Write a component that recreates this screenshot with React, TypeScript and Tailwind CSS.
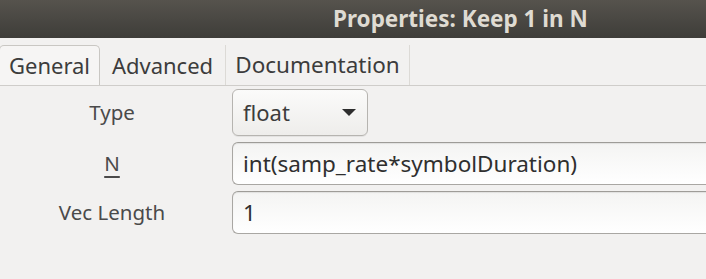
import React from "react";

export default function App() {
  const font = { fontFamily: '"Noto Sans", "Open Sans", sans-serif' };
  return (
    <div className="w-[706px] h-[279px] overflow-hidden bg-[#f2f1f0]" style={font}>
      <div className="h-[38px] bg-gradient-to-b from-[#56534d] to-[#3e3d39] flex items-center pl-[333px]">
        <span className="text-[22.5px] font-bold text-[#dfdbd2] whitespace-nowrap leading-none">Properties: Keep 1 in N</span>
      </div>
      <div className="pt-[7px]">
        <div className="flex h-[41px] border-b border-[#cfcdca] items-stretch">
          <div className="w-[101px] bg-[#f6f5f4] border border-b-0 border-[#c9c7c3] rounded-t-[5px] flex items-center justify-center text-[22px] text-[#3c3c3c] -ml-[1px]">
            General
          </div>
          <div className="w-[126px] border-r border-[#dcdad6] flex items-center justify-center text-[22px] text-[#3c3c3c]">
            Advanced
          </div>
          <div className="w-[184px] border-r border-[#dcdad6] flex items-center justify-center text-[22.5px] text-[#3c3c3c]">
            Documentation
          </div>
        </div>
        <div className="grid grid-cols-[224px_1fr] pt-[3px] gap-y-[6px] items-center">
          <div className="text-center text-[20.5px] text-[#4a4a4a]">Type</div>
          <div className="ml-[8px] w-[136px] h-[47px] rounded-[6px] border border-[#b6b4b0] bg-gradient-to-b from-[#fbfbfa] to-[#eeedeb] flex items-center justify-between pl-[10px] pr-[11px] text-[22px] text-[#3c3c3c] shadow-[0_1px_0_rgba(0,0,0,0.06)]">
            <span>float</span>
            <svg width="14" height="8" viewBox="0 0 14 8"><path d="M0 0 L14 0 L7 7 Z" fill="#2e2e2e" /></svg>
          </div>
          <div className="text-center text-[20.5px] text-[#4a4a4a]"><span className="underline underline-offset-[5px]">N</span></div>
          <div className="ml-[8px] h-[43px] w-[480px] rounded-l-[6px] border border-r-0 border-[#a9a7a3] border-t-[#9e9c98] bg-gradient-to-b from-[#f4f4f3] to-[#ffffff] flex items-center pl-[10px] text-[22.5px] text-[#2f2f2f] shadow-[inset_0_1px_1px_rgba(0,0,0,0.08)]">
            int(samp_rate*symbolDuration)
          </div>
          <div className="text-center text-[20.5px] text-[#4a4a4a]">Vec Length</div>
          <div className="ml-[8px] h-[43px] w-[480px] rounded-l-[6px] border border-r-0 border-[#a9a7a3] border-t-[#9e9c98] bg-gradient-to-b from-[#f4f4f3] to-[#ffffff] flex items-center pl-[10px] text-[22.5px] text-[#2f2f2f] shadow-[inset_0_1px_1px_rgba(0,0,0,0.08)]">
            1
          </div>
        </div>
      </div>
    </div>
  );
}
